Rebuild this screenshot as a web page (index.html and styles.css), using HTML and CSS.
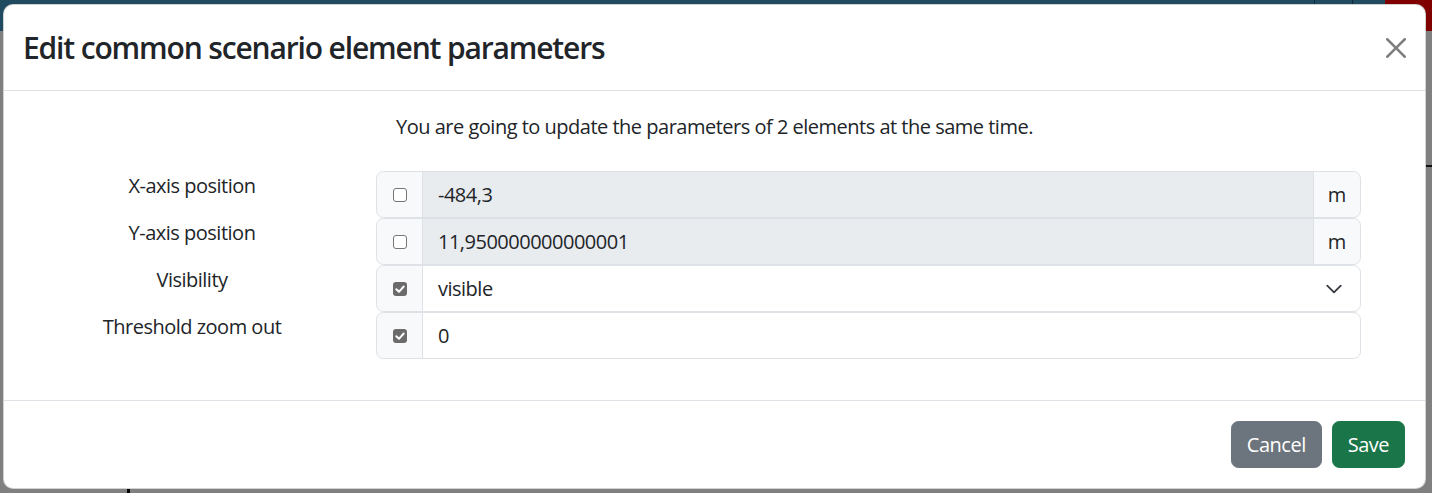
FILE: index.html
```html
<!DOCTYPE html>
<html lang="en">
<head>
<meta charset="utf-8">
<title>Edit common scenario element parameters</title>
<link rel="stylesheet" href="styles.css">
</head>
<body>
<div class="app">
  <div class="topbar">
    <div class="tb-main"></div>
    <div class="tb-seg tb-seg1"></div>
    <div class="tb-seg tb-seg2"></div>
    <div class="tb-red"></div>
  </div>
  <div class="app-main">
    <div class="side"></div>
    <div class="fill"></div>
    <div class="right-edge"></div>
  </div>
</div>

<div class="modal">
  <div class="modal-header">
    <h4 class="modal-title">Edit common scenario element parameters</h4>
    <button class="btn-close" type="button" aria-label="Close">
      <svg viewBox="0 0 16 16" width="20" height="20"><path fill="#000" d="M.293.293a1 1 0 0 1 1.414 0L8 6.586 14.293.293a1 1 0 1 1 1.414 1.414L9.414 8l6.293 6.293a1 1 0 0 1-1.414 1.414L8 9.414l-6.293 6.293a1 1 0 0 1-1.414-1.414L6.586 8 .293 1.707a1 1 0 0 1 0-1.414z"/></svg>
    </button>
  </div>
  <div class="modal-body">
    <p class="intro">You are going to update the parameters of 2 elements at the same time.</p>
    <div class="form">
      <div class="form-row">
        <label class="lbl">X-axis position</label>
        <div class="input-group">
          <span class="ig-check"><span class="cb"></span></span>
          <span class="ig-field disabled">-484,3</span>
          <span class="ig-unit">m</span>
        </div>
      </div>
      <div class="form-row">
        <label class="lbl">Y-axis position</label>
        <div class="input-group">
          <span class="ig-check"><span class="cb"></span></span>
          <span class="ig-field disabled">11,950000000000001</span>
          <span class="ig-unit">m</span>
        </div>
      </div>
      <div class="form-row">
        <label class="lbl">Visibility</label>
        <div class="input-group">
          <span class="ig-check"><span class="cb checked"><svg viewBox="0 0 14 14" width="14" height="14"><path d="M3.3 7.3 6 9.8 10.7 4.5" fill="none" stroke="#fff" stroke-width="2" stroke-linecap="round" stroke-linejoin="round"/></svg></span></span>
          <span class="ig-field ig-last select">
            <span class="select-text">visible</span>
            <svg class="chev" viewBox="0 0 16 16" width="18" height="18"><path d="m2 5 6 6 6-6" fill="none" stroke="#343a40" stroke-width="1.6" stroke-linecap="round" stroke-linejoin="round"/></svg>
          </span>
        </div>
      </div>
      <div class="form-row">
        <label class="lbl">Threshold zoom out</label>
        <div class="input-group">
          <span class="ig-check"><span class="cb checked"><svg viewBox="0 0 14 14" width="14" height="14"><path d="M3.3 7.3 6 9.8 10.7 4.5" fill="none" stroke="#fff" stroke-width="2" stroke-linecap="round" stroke-linejoin="round"/></svg></span></span>
          <span class="ig-field ig-last">0</span>
        </div>
      </div>
    </div>
  </div>
  <div class="modal-footer">
    <button class="btn btn-secondary" type="button">Cancel</button>
    <button class="btn btn-success" type="button">Save</button>
  </div>
</div>
</body>
</html>
```

FILE: styles.css
```css
* { box-sizing: border-box; }

html, body {
  margin: 0;
  padding: 0;
}

body {
  width: 1432px;
  height: 493px;
  overflow: hidden;
  background: #808080;
  font-family: "Open Sans", "Noto Sans", sans-serif;
  color: #212529;
  position: relative;
}

/* ---------- page behind the backdrop ---------- */
.app {
  height: 493px;
  display: flex;
  flex-direction: column;
}

.topbar {
  height: 31px;
  display: flex;
  background: #1f4a5f;
}

.tb-main { flex: 1; }

.tb-seg { border-left: 1px solid #102a37; }
.tb-seg1 { width: 38px; }
.tb-seg2 { width: 33px; }

.tb-red {
  width: 47px;
  background: #800000;
}

.app-main {
  flex: 1;
  display: flex;
}

.side {
  width: 130px;
  border-right: 3px solid #000;
}

.fill { flex: 1; }

.right-edge {
  width: 6px;
  margin-top: 134px;
  border-top: 2px solid #111;
}

/* ---------- modal ---------- */
.modal {
  position: absolute;
  left: 3px;
  top: 4px;
  width: 1423px;
  background: #fff;
  border: 1px solid rgba(0, 0, 0, 0.175);
  border-radius: 10px;
}

.modal-header {
  display: flex;
  align-items: center;
  padding: 20px;
  border-bottom: 1px solid #dee2e6;
}

.modal-title {
  margin: 0 0 0 -1px;
  font-size: 30px;
  line-height: 45px;
  font-weight: 600;
  letter-spacing: -1.15px;
  color: #212529;
}

.btn-close {
  margin: 0 -1px 0 auto;
  padding: 0;
  width: 20px;
  height: 20px;
  border: 0;
  background: transparent;
  opacity: 0.5;
  display: flex;
}

.modal-body {
  padding: 21px 20px 20px 20px;
  font-size: 20px;
  line-height: 30px;
}

.intro {
  margin: 0 0 29px 0;
  text-align: center;
  letter-spacing: -0.5px;
}

.form {
  margin-bottom: 21px;
}

.form-row {
  display: grid;
  grid-template-columns: 336px 985px;
  column-gap: 16px;
}

.lbl {
  text-align: center;
  letter-spacing: -0.5px;
}

.input-group {
  display: flex;
  height: 47px;
}

.ig-check {
  width: 47px;
  flex: none;
  display: flex;
  align-items: center;
  justify-content: center;
  background: #f8f9fa;
  border: 1px solid #dee2e6;
  border-radius: 7.5px 0 0 7.5px;
}

.cb {
  width: 14px;
  height: 14px;
  border: 1px solid #767676;
  border-radius: 3px;
  background: #fff;
  display: flex;
}

.cb.checked {
  border: 0;
  background: #6b6b6b;
}

.ig-field {
  flex: 1;
  display: flex;
  align-items: center;
  margin-left: -1px;
  padding: 0 15px;
  border: 1px solid #dee2e6;
  background: #fff;
  letter-spacing: -0.5px;
}

.ig-field.disabled {
  background: #e9ecef;
}

.ig-last {
  border-radius: 0 7.5px 7.5px 0;
}

.select {
  justify-content: space-between;
  padding-right: 17px;
}

.ig-unit {
  width: 48px;
  flex: none;
  margin-left: -1px;
  display: flex;
  align-items: center;
  justify-content: center;
  background: #f8f9fa;
  border: 1px solid #dee2e6;
  border-radius: 0 7.5px 7.5px 0;
}

.modal-footer {
  display: flex;
  justify-content: flex-end;
  padding: 15px;
  border-top: 1px solid #dee2e6;
}

.btn {
  margin: 5px;
  padding: 7.5px 15px;
  font-family: inherit;
  font-size: 20px;
  line-height: 30px;
  letter-spacing: -0.5px;
  color: #fff;
  border: 1px solid transparent;
  border-radius: 7.5px;
}

.btn-secondary {
  background: #6c757d;
  border-color: #6c757d;
}

.btn-success {
  background: #1a7548;
  border-color: #1a7548;
}
```
